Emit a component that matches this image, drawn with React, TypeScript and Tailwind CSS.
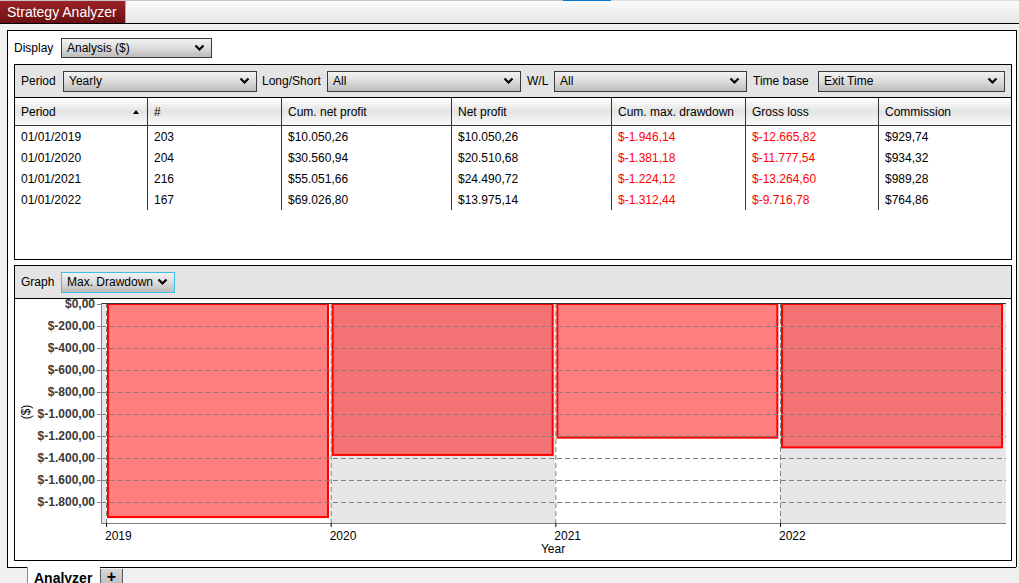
import clsx from "clsx";

const rows = [
  ["01/01/2019", "203", "$10.050,26", "$10.050,26", "$-1.946,14", "$-12.665,82", "$929,74"],
  ["01/01/2020", "204", "$30.560,94", "$20.510,68", "$-1.381,18", "$-11.777,54", "$934,32"],
  ["01/01/2021", "216", "$55.051,66", "$24.490,72", "$-1.224,12", "$-13.264,60", "$989,28"],
  ["01/01/2022", "167", "$69.026,80", "$13.975,14", "$-1.312,44", "$-9.716,78", "$764,86"],
];

const cols = [
  { label: "Period", cls: "w-[133px] border-r", red: false },
  { label: "#", cls: "w-[134px] border-r", red: false },
  { label: "Cum. net profit", cls: "w-[170px] border-r", red: false },
  { label: "Net profit", cls: "w-[160px] border-r", red: false },
  { label: "Cum. max. drawdown", cls: "w-[134px] border-r", red: true },
  { label: "Gross loss", cls: "w-[133px] border-r", red: true },
  { label: "Commission", cls: "flex-1", red: false },
];

const years = [
  { label: "2019", dd: 1946.14 },
  { label: "2020", dd: 1381.18 },
  { label: "2021", dd: 1224.12 },
  { label: "2022", dd: 1312.44 },
];

function Chevron() {
  return (
    <svg width="11" height="8" viewBox="0 0 11 8">
      <polyline points="1.5,1.5 5.5,5.5 9.5,1.5" fill="none" stroke="#000" strokeWidth="2.2" />
    </svg>
  );
}

function Select({ value, className, focus }: { value: string; className: string; focus?: boolean }) {
  return (
    <div
      className={clsx(
        "flex items-center justify-between border bg-linear-to-b from-[#f2f2f2] via-[#dcdcdc] to-[#bcbcbc] pl-[5px] pr-[6px] text-[12px] text-black",
        focus ? "border-[#3cc0ea]" : "border-[#3a3a3a]",
        className
      )}
    >
      <span>{value}</span>
      <Chevron />
    </div>
  );
}

function Chart() {
  const left = 86;
  const right = 991;
  const top = 5;
  const bottom = 224;
  const step = 224.67;
  const ticks = years.map((_, i) => 91 + i * step);
  const scale = 0.11;
  const grid = [1, 2, 3, 4, 5, 6, 7, 8, 9];
  const bands = [
    { x: left, w: ticks[0] - left, fill: "#e6e6e8" },
    { x: ticks[0], w: step, fill: "#ffffff" },
    { x: ticks[1], w: step, fill: "#e6e6e8" },
    { x: ticks[2], w: step, fill: "#ffffff" },
    { x: ticks[3], w: right - ticks[3], fill: "#e6e6e8" },
  ];
  const yLabel = (k: number) => {
    if (k === 0) return "$0,00";
    const v = k * 200;
    const s = v >= 1000 ? `1.${String(v - 1000).padStart(3, "0")}` : String(v);
    return `$-${s},00`;
  };

  return (
    <svg width="996" height="261" className="block font-['Liberation_Sans',Arial,sans-serif]">
      {bands.map((b, i) => (
        <rect key={i} x={b.x} y={top - 1} width={b.w} height={bottom - top + 1} fill={b.fill} />
      ))}
      {years.map((y, i) => (
        <rect
          key={y.label}
          x={ticks[i] + 2}
          y={top}
          width={220}
          height={y.dd * scale - 1}
          fill="rgba(255,0,0,0.5)"
          stroke="#ff0000"
          strokeWidth="2"
        />
      ))}
      {grid.map((k) => (
        <line
          key={k}
          x1={left}
          x2={right}
          y1={top + k * 22 + 0.5}
          y2={top + k * 22 + 0.5}
          stroke="#808080"
          strokeDasharray="5 3"
        />
      ))}
      {ticks.map((t, i) => (
        <line key={i} x1={t + 0.5} x2={t + 0.5} y1={top - 1} y2={bottom} stroke="#808080" strokeDasharray="5 3" />
      ))}
      <line x1={left} x2={right} y1={top - 0.5} y2={top - 0.5} stroke="#333" />
      <line x1={left + 0.5} x2={left + 0.5} y1={top - 1} y2={bottom} stroke="#808080" />
      <line x1={left} x2={right} y1={bottom + 0.5} y2={bottom + 0.5} stroke="#808080" />
      {[0, ...grid].map((k) => (
        <g key={k}>
          <line x1={left - 4} x2={left} y1={top + k * 22 + 0.5} y2={top + k * 22 + 0.5} stroke="#808080" />
          <text x={80} y={top + k * 22 + 4} textAnchor="end" fontSize="12" fontWeight="bold" fill="#3a3a3a">
            {yLabel(k)}
          </text>
        </g>
      ))}
      {ticks.map((t, i) => (
        <g key={i}>
          <line x1={t + 0.5} x2={t + 0.5} y1={bottom} y2={bottom + 4} stroke="#000" />
          <text x={t - 1} y={241} fontSize="12" fill="#000">
            {years[i].label}
          </text>
        </g>
      ))}
      <text x={538} y={254} textAnchor="middle" fontSize="12" fill="#000">
        Year
      </text>
      <text x={15} y={113} textAnchor="middle" fontSize="12" fill="#000" transform="rotate(-90 15 113)">
        ($)
      </text>
    </svg>
  );
}

export default function App() {
  return (
    <div className="flex h-[583px] w-[1019px] flex-col overflow-hidden bg-[#f0f0f0] font-['Liberation_Sans',Arial,sans-serif] text-[12px] text-black">
      <div className="flex h-px">
        <div className="w-[563px] bg-[#c4c4c4]" />
        <div className="w-[48px] bg-[#0078d7]" />
        <div className="flex-1 bg-[#dedede]" />
      </div>
      <div className="flex h-[23px] border-b border-black bg-linear-to-b from-[#fbfbfb] to-[#e6e6e6]">
        <div className="flex w-[126px] items-center border-r border-[#b0b0b0] bg-linear-to-b from-[#9c2226] to-[#6a1013] pl-[7px] text-[14px] text-white">
          Strategy Analyzer
        </div>
        <div className="flex-1" />
      </div>

      <div className="flex flex-1 flex-col pl-[7px] pr-[2px] pt-[6px]">
        <div className="flex flex-col border-x border-t border-black bg-white pl-[6px] pr-[4px] pt-[7px] pb-[6px]">
          <div className="flex h-[20px] items-center">
            <span className="w-[47px]">Display</span>
            <Select value="Analysis ($)" className="h-[20px] w-[151px]" />
          </div>

          <div className="mt-[6px] flex h-[196px] flex-col border border-black">
            <div className="flex h-[33px] items-center border-b border-black bg-[#e4e4e4]">
              <span className="w-[48px] pl-[6px]">Period</span>
              <Select value="Yearly" className="h-[21px] w-[194px]" />
              <span className="w-[70px] pl-[5px]">Long/Short</span>
              <Select value="All" className="h-[21px] w-[194px]" />
              <span className="w-[33px] pl-[6px]">W/L</span>
              <Select value="All" className="h-[21px] w-[193px]" />
              <span className="w-[71px] pl-[6px]">Time base</span>
              <Select value="Exit Time" className="h-[21px] w-[187px]" />
            </div>
            <div className="flex h-[28px] border-b border-[#333] bg-linear-to-b from-white via-[#e4e4e4] to-[#fafafa]">
              {cols.map((c, i) => (
                <div key={c.label} className={clsx("flex items-center border-[#333] pl-[6px]", c.cls, i === 0 && "justify-between pr-[8px]")}>
                  <span>{c.label}</span>
                  {i === 0 && (
                    <svg width="6" height="4" viewBox="0 0 6 4">
                      <polygon points="0,4 3,0 6,4" fill="#000" />
                    </svg>
                  )}
                </div>
              ))}
            </div>
            <div className="flex">
              {cols.map((c, ci) => (
                <div key={c.label} className={clsx("flex flex-col border-[#333]", c.cls)}>
                  {rows.map((r) => (
                    <div
                      key={r[0]}
                      className={clsx("flex h-[21px] items-center pl-[6px]", c.red ? "text-[#ff0000]" : "text-black")}
                    >
                      {r[ci]}
                    </div>
                  ))}
                </div>
              ))}
            </div>
          </div>

          <div className="mt-[5px] flex h-[296px] flex-col border border-black">
            <div className="flex h-[33px] items-center border-b border-black bg-[#e4e4e4]">
              <span className="w-[46px] pl-[6px]">Graph</span>
              <Select value="Max. Drawdown" className="h-[21px] w-[114px]" focus />
            </div>
            <Chart />
          </div>
        </div>

        <div className="flex h-[16px]">
          <div className="w-[20px] border-t border-black" />
          <div className="w-[73px] border-l border-[#8a8a8a] bg-white pl-[6px] pt-[3px] text-[14px] font-bold leading-[16px]">
            Analyzer
          </div>
          <div className="flex w-[23px] flex-col border-t border-black">
            <div className="mt-px flex flex-1 items-start justify-center border-x border-[#555] bg-linear-to-b from-[#d8d8d8] to-[#bdbdbd] text-[16px] font-bold leading-[16px]">
              +
            </div>
          </div>
          <div className="w-[893px] border-t border-black" />
        </div>
      </div>
    </div>
  );
}
